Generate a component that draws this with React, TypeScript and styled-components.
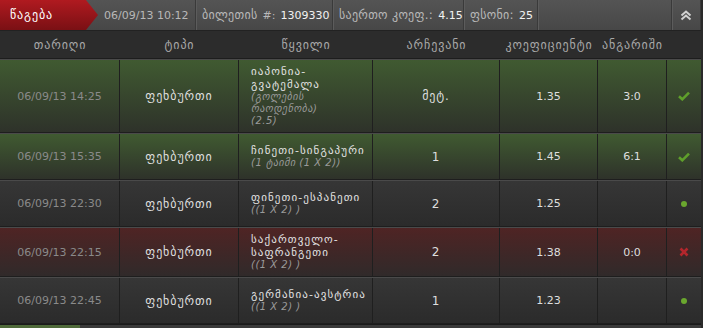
import React from 'react'
import styled, { createGlobalStyle } from 'styled-components'

type Status = 'won' | 'lost' | 'pending'

interface Bet {
  date: string
  sport: string
  pair: string
  market: string
  pick: string
  coef: string
  score: string
  status: Status
}

const bets: Bet[] = [
  {
    date: '06/09/13 14:25',
    sport: 'ფეხბურთი',
    pair: 'იაპონია-გვატემალა',
    market: '(გოლების რაოდენობა)\n(2.5)',
    pick: 'მეტ.',
    coef: '1.35',
    score: '3:0',
    status: 'won',
  },
  {
    date: '06/09/13 15:35',
    sport: 'ფეხბურთი',
    pair: 'ჩინეთი-სინგაპური',
    market: '(1 ტაიმი (1 X 2))',
    pick: '1',
    coef: '1.45',
    score: '6:1',
    status: 'won',
  },
  {
    date: '06/09/13 22:30',
    sport: 'ფეხბურთი',
    pair: 'ფინეთი-ესპანეთი',
    market: '((1 X 2) )',
    pick: '2',
    coef: '1.25',
    score: '',
    status: 'pending',
  },
  {
    date: '06/09/13 22:15',
    sport: 'ფეხბურთი',
    pair: 'საქართველო-საფრანგეთი',
    market: '((1 X 2) )',
    pick: '2',
    coef: '1.38',
    score: '0:0',
    status: 'lost',
  },
  {
    date: '06/09/13 22:45',
    sport: 'ფეხბურთი',
    pair: 'გერმანია-ავსტრია',
    market: '((1 X 2) )',
    pick: '1',
    coef: '1.23',
    score: '',
    status: 'pending',
  },
]

const columns = ['თარიღი', 'ტიპი', 'წყვილი', 'არჩევანი', 'კოეფიციენტი', 'ანგარიში', '']

const GlobalStyle = createGlobalStyle`
  html, body {
    margin: 0;
    padding: 0;
    background: #2a2a2a;
  }
  body {
    font-family: 'DejaVu Sans', 'Noto Sans', sans-serif;
    font-size: 11px;
  }
`

const StatusIcon: React.FC<{ status: Status }> = ({ status }) => {
  if (status === 'won') {
    return (
      <svg width="12" height="10" viewBox="0 0 12 10">
        <path d="M1 5.2 L4.3 8.3 L11 1.6" fill="none" stroke="#5f9f2b" strokeWidth="2.6" />
      </svg>
    )
  }
  if (status === 'lost') {
    return (
      <svg width="10" height="10" viewBox="0 0 10 10">
        <path d="M1.5 1.5 L8.5 8.5 M8.5 1.5 L1.5 8.5" stroke="#b4262c" strokeWidth="2.6" />
      </svg>
    )
  }
  return <Dot />
}

const App: React.FC = () => {
  return (
    <>
      <GlobalStyle />
      <Panel>
        <TopBar>
          <StatusTab>
            <Geo>წაგება</Geo>
          </StatusTab>
          <InfoCell width={98}>06/09/13 10:12</InfoCell>
          <InfoCell width={137}>
            <TopLabel>ბილეთის</TopLabel>
            <span>#:</span>
            <Value>1309330</Value>
          </InfoCell>
          <InfoCell width={131}>
            <TopLabel>საერთო კოეფ.:</TopLabel>
            <Value>4.15</Value>
          </InfoCell>
          <InfoCell width={74}>
            <TopLabel>ფსონი:</TopLabel>
            <Value>25</Value>
          </InfoCell>
          <InfoCell grow />
          <CollapseCell>
            <svg width="12" height="11" viewBox="0 0 12 11">
              <path d="M1.5 5.5 L6 1.5 L10.5 5.5 M1.5 9.5 L6 5.5 L10.5 9.5" fill="none" stroke="#d0d0d0" strokeWidth="2" />
            </svg>
          </CollapseCell>
        </TopBar>

        <HeadRow>
          {columns.map((c, i) => (
            <HeadCell key={i}>
              <Geo>{c}</Geo>
            </HeadCell>
          ))}
        </HeadRow>

        {bets.map((bet, i) => (
          <Row key={i} status={bet.status}>
            <Cell muted>{bet.date}</Cell>
            <Cell>
              <Geo>{bet.sport}</Geo>
            </Cell>
            <PairCell>
              <Pair>{bet.pair}</Pair>
              <Market>{bet.market}</Market>
            </PairCell>
            <Cell>
              <Geo>{bet.pick}</Geo>
            </Cell>
            <Cell>{bet.coef}</Cell>
            <Cell>{bet.score}</Cell>
            <Cell>
              <StatusIcon status={bet.status} />
            </Cell>
          </Row>
        ))}

        <Footer>
          <FooterProgress />
        </Footer>
      </Panel>
    </>
  )
}

const Panel = styled.div`
  width: 701px;
  background: #2a2a2a;
  color: #dcdcdc;
`

const Geo = styled.span`
  font-size: 12px;
  letter-spacing: 0.9px;
`

const TopLabel = styled.span`
  font-size: 12px;
  letter-spacing: 0.3px;
`

const TopBar = styled.div`
  display: flex;
  height: 30px;
  background: linear-gradient(#545454, #474747);
  border-bottom: 1px solid #222;
`

const StatusTab = styled.div`
  width: 98px;
  flex: none;
  display: flex;
  align-items: center;
  padding-left: 10px;
  box-sizing: border-box;
  color: #fff;
  background: linear-gradient(#b01a20, #7a1014);
  clip-path: polygon(0 0, 86px 0, 98px 50%, 86px 100%, 0 100%);
`

const InfoCell = styled.div<{ grow?: boolean; width?: number }>`
  display: flex;
  align-items: center;
  gap: 5px;
  box-sizing: border-box;
  padding: 0 0 0 6px;
  width: ${(props) => (props.width ? `${props.width}px` : 'auto')};
  flex: ${(props) => (props.grow ? 1 : 'none')};
  color: #b8b8b8;
  font-size: 11px;
  white-space: pre;
  border-right: 1px solid #3a3a3a;
  box-shadow: 1px 0 0 #5c5c5c;
`

const Value = styled.span`
  color: #f2f2f2;
`

const CollapseCell = styled.div`
  width: 28px;
  display: flex;
  align-items: center;
  justify-content: center;
  border-right: 1px solid #3a3a3a;
`

const gridColumns = '120px 119px 134px 127px 98px 69px 33px'

const HeadRow = styled.div`
  display: grid;
  grid-template-columns: ${gridColumns};
  height: 27px;
  background: #2c2c2c;
  border-bottom: 1px solid #1d1d1d;
`

const HeadCell = styled.div`
  display: flex;
  align-items: center;
  justify-content: center;
  color: #a8a8a8;
`

const rowBackground: Record<Status, string> = {
  won: 'linear-gradient(#405a31, #2e322a)',
  lost: 'linear-gradient(#4f2424, #302a2a)',
  pending: 'linear-gradient(#363636, #2b2b2b)',
}

const Row = styled.div<{ status: Status }>`
  display: grid;
  grid-template-columns: ${gridColumns};
  min-height: 45px;
  background: ${(props) => rowBackground[props.status]};
  border-top: 1px solid #4a4a4a;
  border-bottom: 1px solid #1e1e1e;
`

const Cell = styled.div<{ muted?: boolean }>`
  display: flex;
  align-items: center;
  justify-content: center;
  color: ${(props) => (props.muted ? '#8a8a8a' : '#dedede')};
  border-right: 1px solid #1f1f1f;
  &:last-child {
    border-right: none;
  }
`

const PairCell = styled.div`
  display: flex;
  flex-direction: column;
  justify-content: center;
  padding: 5px 3px 5px 12px;
  border-right: 1px solid #1f1f1f;
`

const Pair = styled.div`
  color: #e2e2e2;
  font-size: 11px;
  letter-spacing: 1.1px;
  line-height: 13px;
`

const Market = styled.div`
  color: #9a9a9a;
  font-size: 10px;
  font-style: italic;
  letter-spacing: 0.5px;
  line-height: 12px;
  white-space: pre-line;
`

const Dot = styled.span`
  width: 6px;
  height: 6px;
  border-radius: 50%;
  background: #6aa72e;
`

const Footer = styled.div`
  height: 4px;
  background: #3a3a3a;
  border-top: 1px solid #1a1a1a;
`

const FooterProgress = styled.div`
  width: 80px;
  height: 100%;
  background: #4f6a3a;
`

export default App
